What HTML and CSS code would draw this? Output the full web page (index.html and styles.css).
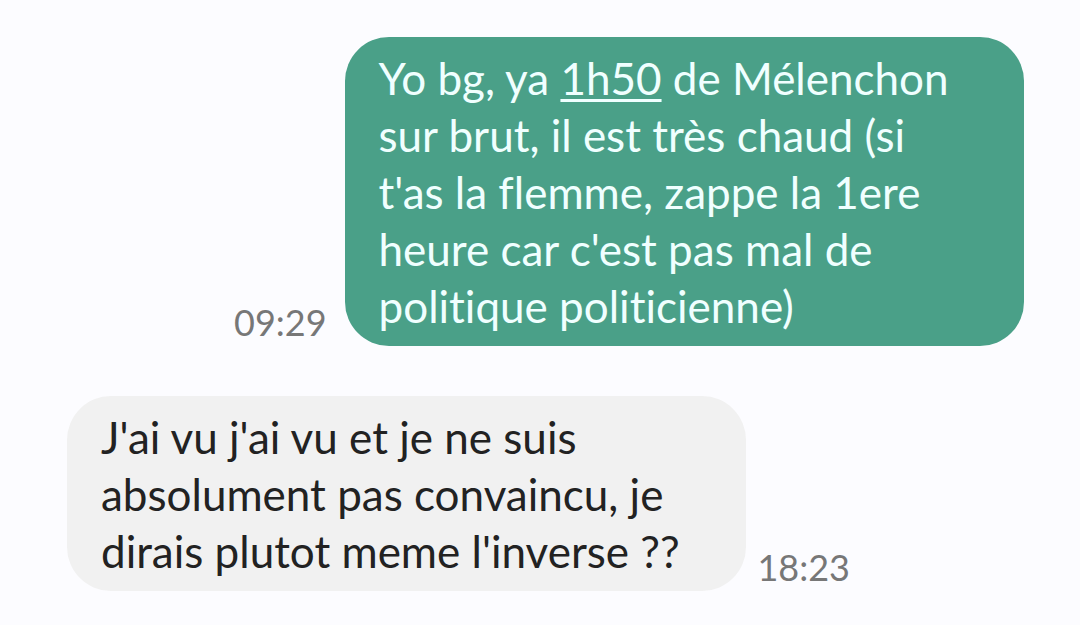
FILE: index.html
```html
<!DOCTYPE html>
<html lang="fr">

<head>
    <meta charset="UTF-8">
    <meta name="viewport" content="width=device-width, initial-scale=1.0">
    <title>Messages</title>
    <link rel="stylesheet" href="styles.css">
</head>

<body>
    <main class="conversation">
        <div class="message sent">
            <time class="time">09:29</time>
            <p class="bubble">Yo bg, ya <a class="duration" href="#">1h50</a> de Mélenchon<br>sur brut, il est très chaud (si<br>t'as la flemme, zappe la 1ere<br>heure car c'est pas mal de<br>politique politicienne)</p>
        </div>

        <div class="message received">
            <p class="bubble">J'ai vu j'ai vu et je ne suis<br>absolument pas convaincu, je<br>dirais plutot meme l'inverse ??</p>
            <time class="time">18:23</time>
        </div>
    </main>
</body>

</html>
```

FILE: styles.css
```css
* {
    box-sizing: border-box;
}

body {
    margin: 0;
    font-family: Lato, "Noto Sans", sans-serif;
    font-variant-ligatures: none;
    background-color: #fcfcff;
    color: #222;
}

.conversation {
    display: flex;
    flex-direction: column;
    gap: 50px;
    padding: 37px 56px 35px 67px;
}

.message {
    display: flex;
    align-items: flex-end;
}

.sent {
    justify-content: flex-end;
    gap: 18px;
}

.received {
    gap: 11px;
}

.bubble {
    width: 71%;
    margin: 0;
    padding: 13px 34px 11px;
    border-radius: 44px;
    font-size: 44px;
    line-height: 57px;
}

.sent .bubble {
    background-color: #4aa088;
    color: #f0ffff;
}

.received .bubble {
    background-color: #f1f1f1;
}

.duration {
    color: inherit;
    text-decoration: underline;
    text-decoration-thickness: 3px;
    text-underline-offset: 4px;
}

.time {
    font-size: 36px;
    line-height: 48px;
    color: #777;
}
```
